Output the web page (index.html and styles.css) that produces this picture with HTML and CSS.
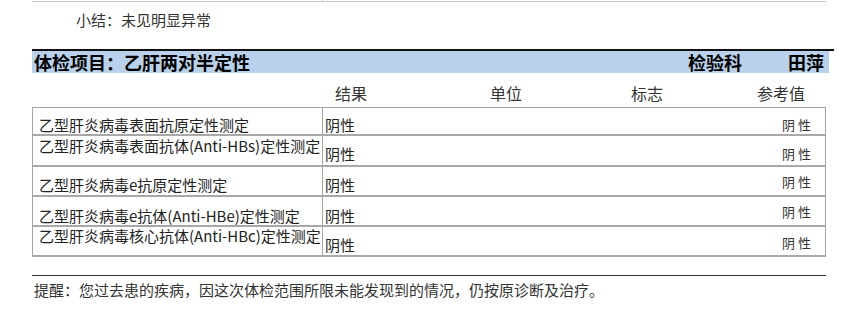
FILE: index.html
```html
<!DOCTYPE html>
<html lang="zh-CN">
<head>
<meta charset="utf-8">
<title>体检报告</title>
<link rel="stylesheet" href="styles.css">
</head>
<body>
<div class="page">
  <div class="prev"><div class="prev-left"></div><div class="prev-right"></div></div>
  <p class="summary">小结：未见明显异常</p>

  <div class="section-head">
    <span class="title">体检项目：乙肝两对半定性</span>
    <span class="dept">检验科</span>
    <span class="doctor">田萍</span>
  </div>

  <div class="col-head">
    <span>结果</span>
    <span>单位</span>
    <span>标志</span>
    <span>参考值</span>
  </div>

  <div class="table">
    <div class="row r1">
      <div class="c-name">乙型肝炎病毒表面抗原定性测定</div>
      <div class="c-result">阴性</div>
      <div class="c-ref">阴 性</div>
    </div>
    <div class="row r2">
      <div class="c-name">乙型肝炎病毒表面抗体(Anti-HBs)定性测定</div>
      <div class="c-result">阴性</div>
      <div class="c-ref">阴 性</div>
    </div>
    <div class="row r3">
      <div class="c-name">乙型肝炎病毒e抗原定性测定</div>
      <div class="c-result">阴性</div>
      <div class="c-ref">阴 性</div>
    </div>
    <div class="row r4">
      <div class="c-name">乙型肝炎病毒e抗体(Anti-HBe)定性测定</div>
      <div class="c-result">阴性</div>
      <div class="c-ref">阴 性</div>
    </div>
    <div class="row r5">
      <div class="c-name">乙型肝炎病毒核心抗体(Anti-HBc)定性测定</div>
      <div class="c-result">阴性</div>
      <div class="c-ref">阴 性</div>
    </div>
  </div>

  <div class="remind">提醒：您过去患的疾病，因这次体检范围所限未能发现到的情况，仍按原诊断及治疗。</div>
</div>
</body>
</html>
```

FILE: styles.css
```css
* { box-sizing: border-box; }

html, body {
  margin: 0;
  padding: 0;
  background: #fff;
}

body {
  font-family: "Noto Sans CJK SC", "Noto Sans", sans-serif;
  color: #222;
  width: 846px;
  height: 334px;
  overflow: hidden;
}

.page {
  margin-left: 32px;
  width: 794px;
}

.prev {
  display: grid;
  grid-template-columns: 291px 1fr;
  height: 2px;
  border-bottom: 1px solid #c8c8c8;
}
.prev-left { border-right: 1px solid #c8c8c8; }

.summary {
  margin: 0;
  padding: 8px 0 0 44px;
  font-size: 15px;
  line-height: 20px;
  color: #333;
  height: 47px;
}

.section-head {
  display: flex;
  align-items: center;
  height: 24px;
  width: 802px;
  border-top: 2px solid #111;
  font-weight: 700;
  font-size: 18px;
  line-height: 22px;
  color: #000;
  background: linear-gradient(to right, #b9d1ea 0, #b9d1ea 797px, #fff 797px);
}
.section-head .title { padding-left: 2px; flex: 1; }
.section-head .dept { width: 100px; }
.section-head .doctor { width: 46px; }

.col-head {
  display: grid;
  grid-template-columns: 155px 141px 126px 1fr;
  height: 34px;
  padding: 10px 0 0 303px;
  font-size: 16px;
  line-height: 20px;
  color: #333;
}

.table {
  border: 1px solid #a4a4a4;
  border-bottom: none;
  font-size: 15px;
  line-height: 18px;
  color: #222;
}

.row {
  display: grid;
  grid-template-columns: 290px 1fr auto;
  border-bottom: 2px solid #a8a8a8;
}

.row > div { display: flex; }

.c-name {
  border-right: 1px solid #a4a4a4;
  padding-left: 6px;
  white-space: nowrap;
}
.c-result { padding-left: 2px; }
.c-ref {
  padding-right: 14px;
  font-size: 13px;
  color: #333;
}

.r1 { height: 28px; }
.r2 { height: 31px; }
.r3 { height: 30px; }
.r4 { height: 30px; }
.r5 { height: 30px; }

.r1 > div { align-items: flex-end; padding-bottom: 0; }

.r2 .c-name { align-items: flex-start; padding-top: 1px; }
.r2 .c-result, .r2 .c-ref { align-items: flex-end; padding-bottom: 2px; }

.r3 > div { align-items: flex-end; padding-bottom: 1px; }
.r3 .c-ref { padding-bottom: 4px; }

.r4 > div { align-items: flex-end; padding-bottom: 0; }
.r4 .c-ref { padding-bottom: 4px; }

.r5 .c-name { align-items: flex-start; padding-top: 0; }
.r5 .c-result { align-items: flex-end; padding-bottom: 1px; }
.r5 .c-ref { align-items: flex-end; padding-bottom: 3px; }

.remind {
  margin-top: 18px;
  border-top: 1px solid #333;
  padding-top: 4px;
  padding-left: 2px;
  font-size: 15px;
  line-height: 20px;
  color: #333;
}
```
